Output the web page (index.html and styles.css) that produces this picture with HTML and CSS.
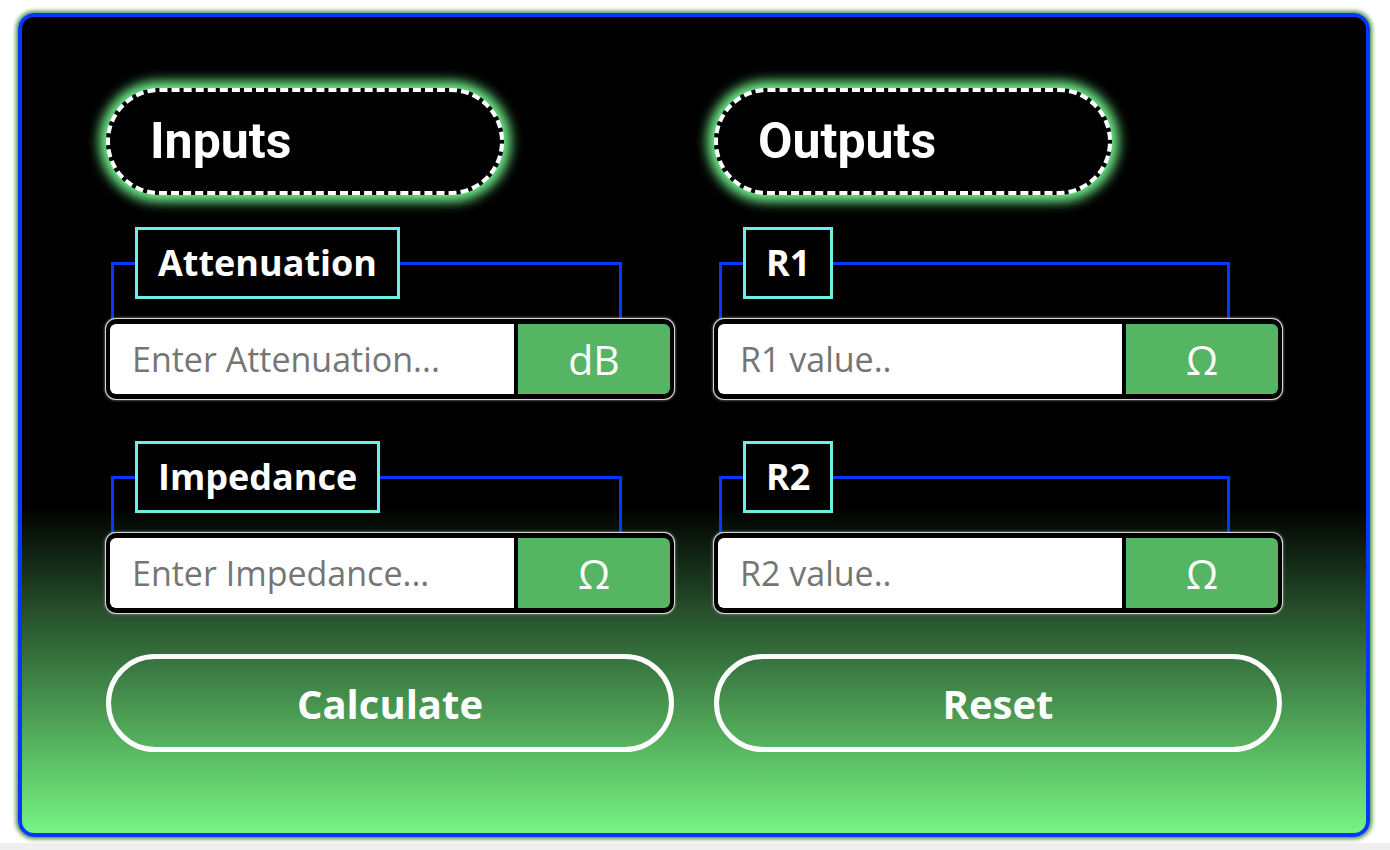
FILE: index.html
```html
<!DOCTYPE html>
<html lang="en">
<head>
    <meta charset="UTF-8">
    <meta name="viewport" content="width=device-width, initial-scale=1.0">
    <title>Attenuator Calculator</title>
    <link rel="stylesheet" href="styles.css">
</head>
<body>
    <form class="calculator" id="calcForm">
        <div class="column">
            <h2 class="section-title">Inputs</h2>

            <fieldset class="field">
                <legend>Attenuation</legend>
            </fieldset>
            <div class="input-group">
                <input type="text" id="attenuation" class="value-input" placeholder="Enter Attenuation...">
                <span class="unit">dB</span>
            </div>

            <fieldset class="field">
                <legend>Impedance</legend>
            </fieldset>
            <div class="input-group">
                <input type="text" id="impedance" class="value-input" placeholder="Enter Impedance...">
                <span class="unit">Ω</span>
            </div>

            <button type="submit" class="btn">Calculate</button>
        </div>

        <div class="column">
            <h2 class="section-title">Outputs</h2>

            <fieldset class="field">
                <legend>R1</legend>
            </fieldset>
            <div class="input-group">
                <input type="text" id="r1" class="value-input" placeholder="R1 value.." readonly>
                <span class="unit">Ω</span>
            </div>

            <fieldset class="field">
                <legend>R2</legend>
            </fieldset>
            <div class="input-group">
                <input type="text" id="r2" class="value-input" placeholder="R2 value.." readonly>
                <span class="unit">Ω</span>
            </div>

            <button type="reset" class="btn">Reset</button>
        </div>
    </form>

    <script>
        document.getElementById('calcForm').addEventListener('submit', function(e) {
            e.preventDefault();

            const att = parseFloat(document.getElementById('attenuation').value);
            const z = parseFloat(document.getElementById('impedance').value);
            if (isNaN(att) || isNaN(z)) return;

            // T-pad attenuator
            const k = Math.pow(10, att / 20);
            const r1 = z * (k - 1) / (k + 1);
            const r2 = 2 * z * k / (k * k - 1);

            document.getElementById('r1').value = r1.toFixed(2);
            document.getElementById('r2').value = r2.toFixed(2);
        });
    </script>
</body>
</html>
```

FILE: styles.css
```css
html {
    background: #efefef;
}

body {
    margin: 0;
    padding: 13px 20px 6px 18px;
    background: #ffffff;
    font-family: 'Open Sans', 'Liberation Sans', sans-serif;
}

.calculator {
    display: grid;
    grid-template-columns: 1fr 1fr;
    column-gap: 40px;
    padding: 71px 84px 81px;
    border: 4px solid #0638ff;
    border-radius: 16px;
    background: linear-gradient(to bottom, #000000 60%, #76f583 100%);
    box-shadow: 0 0 4px 2px #4f8f40;
}

.column {
    display: flex;
    flex-direction: column;
    min-width: 0;
}

.section-title {
    width: 70%;
    box-sizing: border-box;
    margin: 0;
    padding: 21px 40px;
    border: 4px dashed #ffffff;
    border-radius: 60px;
    background: #000000;
    box-shadow: 0 0 12px 7px #6ff08a;
    color: #ffffff;
    font-family: Roboto, 'Liberation Sans', sans-serif;
    font-size: 50px;
    font-weight: 700;
    line-height: 57px;
}

.field {
    width: 511px;
    box-sizing: border-box;
    margin: 32px 0 0 5px;
    padding: 0 0 20px 21px;
    border: 3px solid #0638ff;
    border-bottom: none;
    min-inline-size: 0;
}

.field + .input-group + .field {
    margin-top: 42px;
}

.field legend {
    padding: 8px 20px;
    border: 3px solid #70eedf;
    background: #000000;
    color: #ffffff;
    font-size: 36px;
    font-weight: 700;
    line-height: 50px;
}

.input-group {
    display: flex;
    gap: 4px;
    height: 80px;
    box-sizing: border-box;
    padding: 5px 4px;
    background: #000000;
    border-radius: 10px;
    box-shadow: 0 0 0 1px #d6d6d6, 0 0 3px 1px #999999;
}

.value-input {
    flex: 1;
    min-width: 0;
    padding: 0 22px;
    border: none;
    border-radius: 6px 0 0 6px;
    background: #ffffff;
    color: #333333;
    font-family: 'Open Sans', 'Liberation Sans', sans-serif;
    font-size: 34px;
    outline: none;
}

.value-input::placeholder {
    color: #757575;
}

.unit {
    display: flex;
    align-items: center;
    justify-content: center;
    width: 152px;
    border-radius: 0 6px 6px 0;
    background: #55b562;
    color: #ffffff;
    font-size: 41px;
}

.btn {
    height: 98px;
    margin-top: 41px;
    border: 5px solid #ffffff;
    border-radius: 50px;
    background: transparent;
    color: #ffffff;
    font-family: 'Open Sans', 'Liberation Sans', sans-serif;
    font-size: 40px;
    font-weight: 700;
    cursor: pointer;
}
```
